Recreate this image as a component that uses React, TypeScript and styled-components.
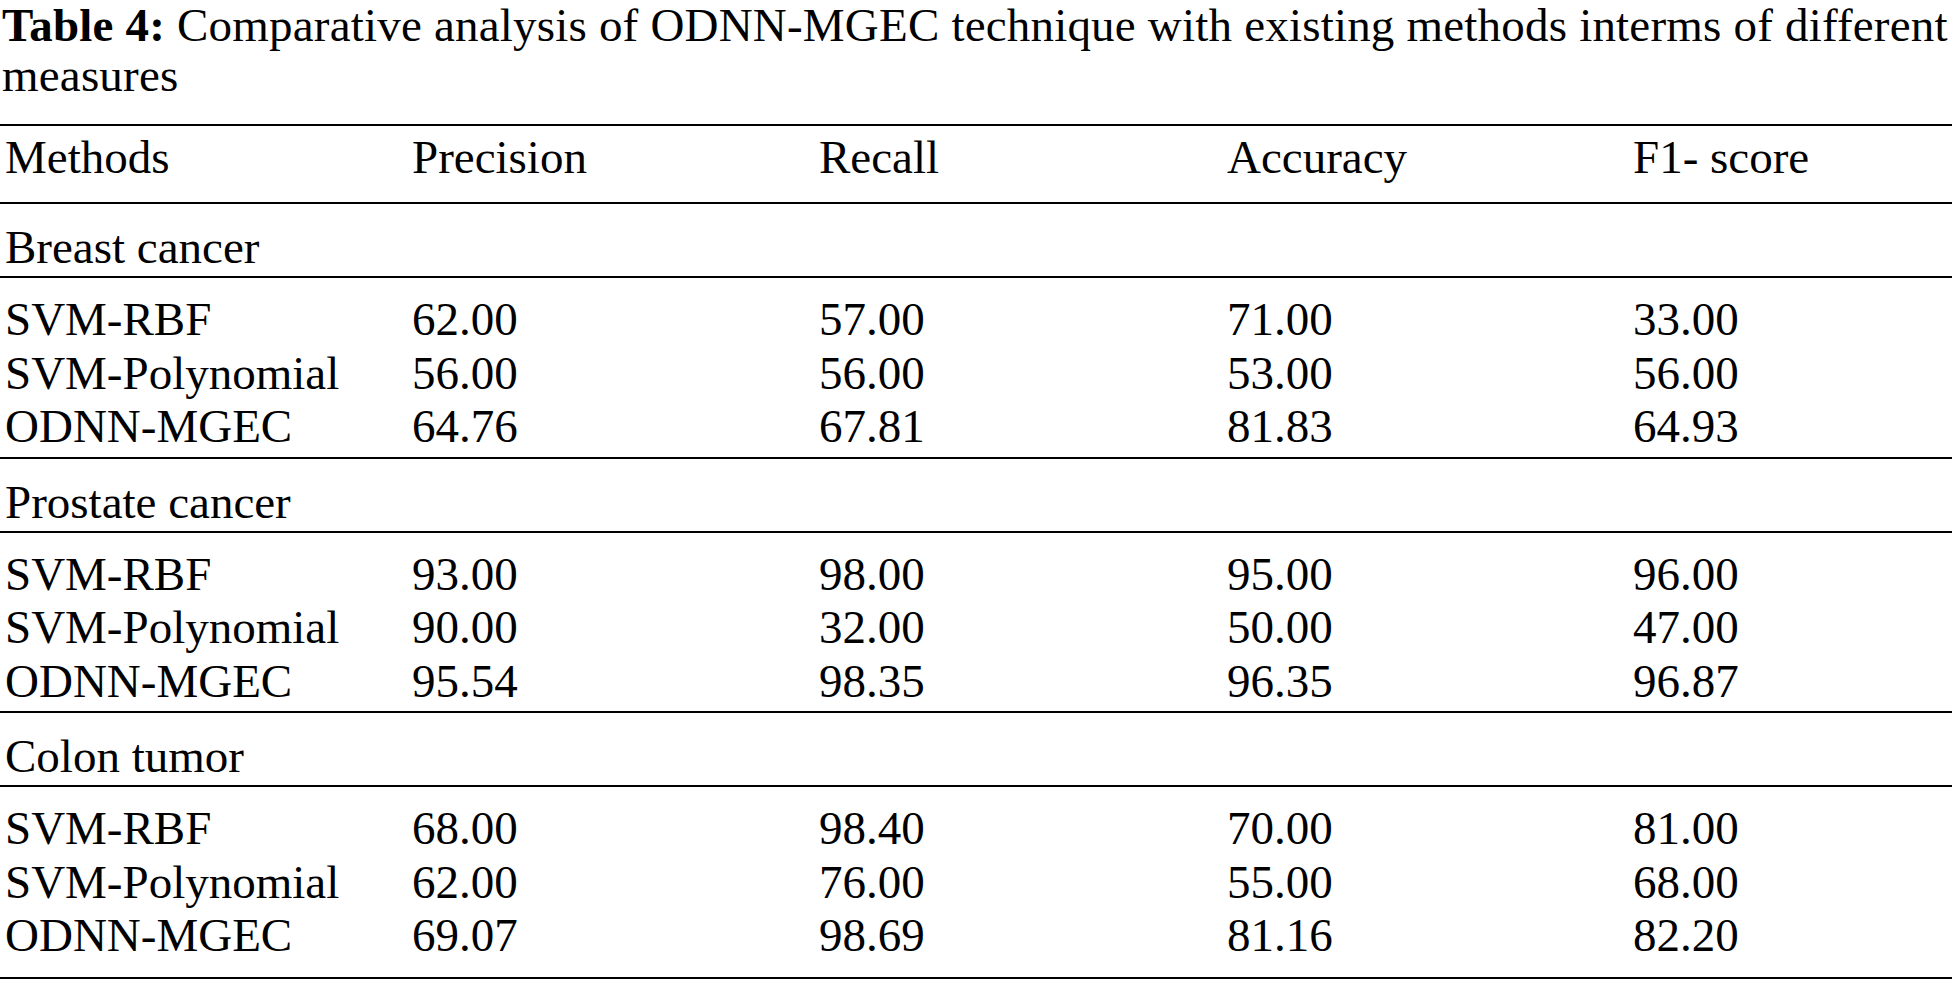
import React from "react";
import styled, { createGlobalStyle } from "styled-components";

const GlobalStyle = createGlobalStyle`
  html, body {
    margin: 0;
    padding: 0;
    background: #ffffff;
  }
  body {
    font-family: "Liberation Serif", "Times New Roman", serif;
    color: #000000;
    overflow: hidden;
  }
`;

const Page = styled.div`
  width: 1952px;
  display: flex;
  flex-direction: column;
`;

const Caption = styled.p`
  margin: 0 0 24px 0;
  padding-left: 2px;
  font-size: 47px;
  line-height: 50px;
  font-weight: 400;
  letter-spacing: 0.2px;
`;

const CaptionLabel = styled.b`
  font-weight: 700;
`;

const Table = styled.div`
  display: flex;
  flex-direction: column;
  border-bottom: 2px solid #000;
`;

const Row = styled.div<{ $pt: number; $pb: number }>`
  display: grid;
  grid-template-columns: 407px 407px 408px 406px 1fr;
  padding: ${(p) => p.$pt}px 0 ${(p) => p.$pb}px 5px;
  border-top: 2px solid #000;
  font-size: 47px;
  line-height: 54px;
`;

const DataBlock = styled.div<{ $pb: number }>`
  display: flex;
  flex-direction: column;
  border-top: 2px solid #000;
  padding: 15px 0 ${(p) => p.$pb}px 0;
`;

const DataRow = styled.div`
  display: grid;
  grid-template-columns: 407px 407px 408px 406px 1fr;
  padding-left: 5px;
  font-size: 47px;
  line-height: 53.5px;
`;

const Cell = styled.span`
  white-space: nowrap;
`;

const GroupLabel = styled.span`
  grid-column: 1 / -1;
  white-space: nowrap;
`;

type Group = {
  name: string;
  rows: [string, string, string, string, string][];
};

const groups: Group[] = [
  {
    name: "Breast cancer",
    rows: [
      ["SVM-RBF", "62.00", "57.00", "71.00", "33.00"],
      ["SVM-Polynomial", "56.00", "56.00", "53.00", "56.00"],
      ["ODNN-MGEC", "64.76", "67.81", "81.83", "64.93"],
    ],
  },
  {
    name: "Prostate cancer",
    rows: [
      ["SVM-RBF", "93.00", "98.00", "95.00", "96.00"],
      ["SVM-Polynomial", "90.00", "32.00", "50.00", "47.00"],
      ["ODNN-MGEC", "95.54", "98.35", "96.35", "96.87"],
    ],
  },
  {
    name: "Colon tumor",
    rows: [
      ["SVM-RBF", "68.00", "98.40", "70.00", "81.00"],
      ["SVM-Polynomial", "62.00", "76.00", "55.00", "68.00"],
      ["ODNN-MGEC", "69.07", "98.69", "81.16", "82.20"],
    ],
  },
];

const headers = ["Methods", "Precision", "Recall", "Accuracy", "F1- score"];

export default function App() {
  return (
    <>
      <GlobalStyle />
      <Page>
        <Caption>
          <CaptionLabel>Table 4:</CaptionLabel> Comparative analysis of ODNN-MGEC technique with
          existing methods interms of different measures
        </Caption>
        <Table>
          <Row $pt={4} $pb={18}>
            {headers.map((h) => (
              <Cell key={h}>{h}</Cell>
            ))}
          </Row>
          {groups.map((g, gi) => (
            <React.Fragment key={g.name}>
              <Row $pt={16} $pb={2}>
                <GroupLabel>{g.name}</GroupLabel>
              </Row>
              <DataBlock $pb={gi === groups.length - 1 ? 14 : 3}>
                {g.rows.map((r) => (
                  <DataRow key={r[0]}>
                    {r.map((c, ci) => (
                      <Cell key={ci}>{c}</Cell>
                    ))}
                  </DataRow>
                ))}
              </DataBlock>
            </React.Fragment>
          ))}
        </Table>
      </Page>
    </>
  );
}
